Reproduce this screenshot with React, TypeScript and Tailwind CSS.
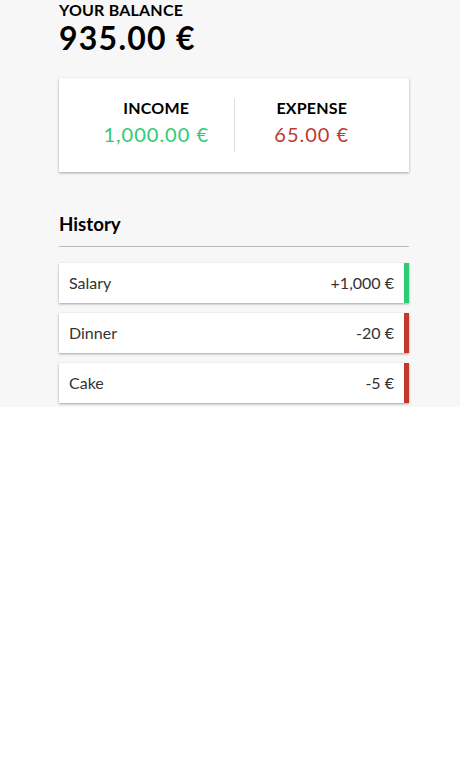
const SHADOW = 'shadow-[0_1px_3px_rgba(0,0,0,0.12),0_1px_2px_rgba(0,0,0,0.24)]'

const TRANSACTIONS = [
  { id: 1, text: 'Salary', amount: 1000 },
  { id: 2, text: 'Dinner', amount: -20 },
  { id: 3, text: 'Cake', amount: -5 },
]

function formatAmount(n: number) {
  const sign = n < 0 ? '-' : '+'
  return `${sign}${Math.abs(n).toLocaleString('en-US')} €`
}

export default function App() {
  return (
    <div className="bg-[#f7f7f7] font-['Lato',sans-serif] leading-[1.2] text-black pb-[4px]">
      <div className="ml-[59px] w-[350px]">
        <h4 className="text-[16px] font-bold uppercase tracking-[0.2px] m-0">Your Balance</h4>
        <h1 className="text-[32px] font-bold tracking-[1.25px] m-0">935.00 €</h1>

        <div className={`bg-white ${SHADOW} p-[20px] flex justify-between mt-[20px]`}>
          <div className="flex-1 text-center border-r border-[#dedede]">
            <h4 className="text-[16px] font-bold uppercase tracking-[0.2px]">Income</h4>
            <p className="text-[20px] leading-[25px] tracking-[1px] my-[5px] text-[#2ecc71]">1,000.00 €</p>
          </div>
          <div className="flex-1 text-center">
            <h4 className="text-[16px] font-bold uppercase tracking-[0.2px]">Expense</h4>
            <p className="text-[20px] leading-[25px] tracking-[1px] my-[5px] text-[#c0392b]">65.00 €</p>
          </div>
        </div>

        <h3 className="text-[18.72px] leading-[24px] font-bold mt-[40px] pb-[10px] border-b border-[#bbb]">History</h3>

        <ul className="mt-[16px] flex flex-col gap-[10px]">
          {TRANSACTIONS.map((t) => (
            <li
              key={t.id}
              className={`bg-white ${SHADOW} text-[#333] text-[16px] leading-[20px] flex justify-between p-[10px] border-r-[5px] ${
                t.amount < 0 ? 'border-[#c0392b]' : 'border-[#2ecc71]'
              }`}
            >
              <span>{t.text}</span>
              <span>{formatAmount(t.amount)}</span>
            </li>
          ))}
        </ul>
      </div>
    </div>
  )
}
